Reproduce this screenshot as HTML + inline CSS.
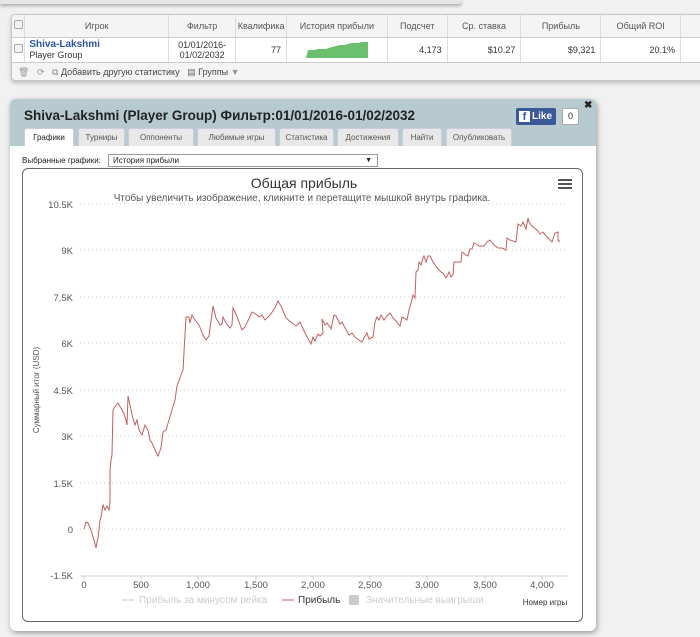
<!DOCTYPE html>
<html><head><meta charset="utf-8"><style>
*{box-sizing:border-box;margin:0;padding:0}
body{width:700px;height:637px;background:#f1f1f1;font-family:"Liberation Sans",sans-serif;position:relative;overflow:hidden;color:#333}
.abs{position:absolute}
.topshadow{left:0;top:0;width:462px;height:4px;background:#e6e6e6;box-shadow:0 2px 3px #aaa;border-radius:0 0 4px 0}
.panel{left:11px;top:14px;width:700px;height:67px;border:1px solid #c8c8c8;border-radius:4px;background:#f4f4f4;box-shadow:0 2px 4px #bbb;overflow:hidden}
table{border-collapse:collapse;font-size:9px;position:absolute;left:0;top:0}
th{height:22px;font-weight:normal;color:#555;background:#f4f4f4;border-right:1px solid #ddd;border-bottom:1px solid #ccc;text-align:center;white-space:nowrap;overflow:hidden}
td{height:25px;background:#fff;border-right:1px solid #ddd;border-bottom:1px solid #ccc;text-align:right;padding-right:5px;font-size:9px;color:#333}
.cb{display:inline-block;width:9px;height:9px;border:1px solid #aaa;border-radius:2px;background:#f4f4f4}
.tb{left:6px;top:52px;font-size:9px;color:#444}
.dlg{left:10px;top:99px;width:586px;height:532px;background:#fff;border-radius:6px;box-shadow:1px 2px 6px #999;overflow:hidden}
.hdr{left:0;top:0;width:586px;height:47px;background:#b7cad0}
.title{left:14px;top:9px;font-size:13.5px;font-weight:bold;color:#222}
.tab{top:29px;height:18px;background:#e8e8e8;border:1px solid #ccd;border-bottom:none;border-radius:3px 3px 0 0;font-size:8px;color:#555;text-align:center;line-height:17px}
.tab.act{background:#fff;color:#222}
.chart{left:12px;top:69px;width:561px;height:454px;border:1px solid #666;border-radius:6px}
</style></head><body>
<div class="abs topshadow"></div>
<div class="abs panel">
<table>
<tr><th style="width:13px"><span class="cb"></span></th><th style="width:148px">Игрок</th><th style="width:68px">Фильтр</th><th style="width:51px">Квалифика</th><th style="width:102px">История прибыли</th><th style="width:61px">Подсчет</th><th style="width:75px">Ср. ставка</th><th style="width:82px">Прибыль</th><th style="width:81px">Общий ROI</th><th style="width:30px"></th></tr>
<tr><td style="text-align:center;padding:0"><span class="cb"></span></td>
<td style="text-align:left;padding-left:4px;line-height:10px"><b style="color:#2a55a0;font-size:10px">Shiva-Lakshmi</b><br>Player Group</td>
<td style="text-align:center;padding:0;line-height:10px">01/01/2016-<br>01/02/2032</td>
<td>77</td>
<td style="text-align:center;padding:0"><svg width="62" height="18" viewBox="0 0 62 18"><path d="M0 18 L2 10 L8 10 L12 9 L20 9 L26 7 L30 6 L34 5 L38 5 L42 4 L46 3 L52 3 L56 2 L62 2 L62 18Z" fill="#6cbf6c"/></svg></td>
<td>4,173</td><td>$10.27</td><td>$9,321</td><td>20.1%</td><td></td></tr>
</table>
<div class="abs tb"><span style="color:#999">🗑</span>&nbsp;&nbsp;&nbsp;<span style="color:#999">⟳</span>&nbsp;&nbsp; <span style="color:#888">⧉</span> Добавить другую статистику &nbsp;&nbsp;<span style="color:#666">▤</span> Группы <span style="color:#999">▼</span></div>
</div>

<div class="abs dlg">
<div class="abs hdr"></div>
<div class="abs title">Shiva-Lakshmi (Player Group) Фильтр:01/01/2016-01/02/2032</div>
<div class="abs" style="left:506px;top:9px;width:40px;height:17px;background:#3b5998;border-radius:2px;color:#fff;font-size:10px;font-weight:bold;line-height:17px"><span style="display:inline-block;width:11px;height:11px;background:#fff;color:#3b5998;margin:3px 2px 0 3px;vertical-align:top;line-height:13px;text-align:center;font-size:11px">f</span>Like</div>
<div class="abs" style="left:552px;top:9px;width:17px;height:17px;background:#fff;border:1px solid #aaa;border-radius:2px;font-size:9px;text-align:center;line-height:15px">0</div>
<div class="abs" style="left:574px;top:1px;font-size:10px;font-weight:bold;color:#222">✖</div>
<div class="abs tab act" style="left:14px;width:50px">Графики</div>
<div class="abs tab" style="left:68px;width:47px">Турниры</div>
<div class="abs tab" style="left:118px;width:66px">Оппоненты</div>
<div class="abs tab" style="left:187px;width:79px">Любимые игры</div>
<div class="abs tab" style="left:269px;width:55px">Статистика</div>
<div class="abs tab" style="left:327px;width:62px">Достижения</div>
<div class="abs tab" style="left:392px;width:40px">Найти</div>
<div class="abs tab" style="left:436px;width:66px">Опубликовать</div>
<div class="abs" style="left:12px;top:57px;font-size:8px;color:#222">Выбранные графики:</div>
<div class="abs" style="left:98px;top:55px;width:270px;height:13px;border:1px solid #999;font-size:8px;line-height:11px;padding-left:4px;color:#222">История прибыли<span style="position:absolute;right:5px;font-size:7px">▼</span></div>
<div class="abs chart"></div>
</div>

<svg class="abs" style="left:0;top:0" width="700" height="637">
<text x="304" y="188" font-size="14" fill="#333" text-anchor="middle" font-family="Liberation Sans">Общая прибыль</text>
<text x="302" y="201" font-size="10" fill="#555" text-anchor="middle" font-family="Liberation Sans">Чтобы увеличить изображение, кликните и перетащите мышкой внутрь графика.</text>
<g fill="#555"><rect x="558" y="179" width="14" height="2"/><rect x="558" y="183" width="14" height="2"/><rect x="558" y="187" width="14" height="2"/></g>
<g stroke="#ccc" stroke-dasharray="1,3"><line x1="80" y1="204" x2="568" y2="204"/><line x1="80" y1="250" x2="568" y2="250"/><line x1="80" y1="297" x2="568" y2="297"/><line x1="80" y1="343" x2="568" y2="343"/><line x1="80" y1="390" x2="568" y2="390"/><line x1="80" y1="436" x2="568" y2="436"/><line x1="80" y1="483" x2="568" y2="483"/><line x1="80" y1="529" x2="568" y2="529"/></g>
<line x1="80" y1="576" x2="568" y2="576" stroke="#ccd"/>
<g stroke="#ccd"><line x1="84" y1="576" x2="84" y2="580"/><line x1="141" y1="576" x2="141" y2="580"/><line x1="198" y1="576" x2="198" y2="580"/><line x1="256" y1="576" x2="256" y2="580"/><line x1="313" y1="576" x2="313" y2="580"/><line x1="370" y1="576" x2="370" y2="580"/><line x1="427" y1="576" x2="427" y2="580"/><line x1="485" y1="576" x2="485" y2="580"/><line x1="542" y1="576" x2="542" y2="580"/></g>
<g font-size="9.5" fill="#555" text-anchor="end" font-family="Liberation Sans"><text x="73" y="208">10.5K</text><text x="73" y="254">9K</text><text x="73" y="301">7.5K</text><text x="73" y="347">6K</text><text x="73" y="394">4.5K</text><text x="73" y="440">3K</text><text x="73" y="487">1.5K</text><text x="73" y="533">0</text><text x="73" y="579">-1.5K</text></g>
<g font-size="9.5" fill="#555" text-anchor="middle" font-family="Liberation Sans"><text x="84" y="588">0</text><text x="141" y="588">500</text><text x="198" y="588">1,000</text><text x="256" y="588">1,500</text><text x="313" y="588">2,000</text><text x="370" y="588">2,500</text><text x="427" y="588">3,000</text><text x="485" y="588">3,500</text><text x="542" y="588">4,000</text></g>
<text transform="translate(39,390) rotate(-90)" font-size="8" fill="#555" text-anchor="middle" font-family="Liberation Sans">Суммарный итог (USD)</text>
<line x1="122" y1="600" x2="134" y2="600" stroke="#ccc"/>
<text x="139" y="603" font-size="10" fill="#ccc" font-family="Liberation Sans">Прибыль за минусом рейка</text>
<line x1="282" y1="600" x2="294" y2="600" stroke="#c66"/>
<text x="298" y="603" font-size="10" fill="#333" font-family="Liberation Sans">Прибыль</text>
<rect x="349" y="595" width="10" height="10" rx="1" fill="#ccc"/>
<text x="366" y="603" font-size="10" fill="#ccc" font-family="Liberation Sans">Значительные выигрыши</text>
<text x="545" y="605" font-size="8" fill="#333" text-anchor="middle" font-family="Liberation Sans">Номер игры</text>
<polyline fill="none" stroke="#c06060" stroke-width="1" points="84,529 86,522 88,523 91,530 94,540 96,548 97,542 98,538 100,520 101,517 103,505 105,510 107,506 109,510 110,501 110,470 111,460 112,455 113,410 114,408 118,403 122,410 124,414 126,420 127,425 128,396 130,405 132,415 135,425 137,420 139,430 142,435 145,425 148,430 150,440 152,443 156,452 158,456 161,448 163,432 166,430 169,420 172,410 175,400 177,386 181,375 183,370 186,317 189,317 190,323 192,315 195,320 199,325 203,335 206,340 209,336 211,321 213,306 216,318 220,325 222,324 223,317 226,323 230,328 232,325 233,308 236,314 239,322 242,330 245,327 252,312 256,314 259,317 262,315 265,320 270,315 275,308 278,301 281,306 286,318 292,323 296,326 300,322 305,333 311,344 313,337 315,341 318,334 320,336 323,333 322,319 325,325 327,323 331,329 334,315 336,316 340,324 342,322 344,326 349,335 352,333 355,337 359,340 362,342 364,338 367,333 369,339 373,337 375,322 377,317 379,320 381,315 384,320 388,315 390,313 393,318 396,321 400,326 402,317 404,318 407,320 409,310 411,303 413,295 415,298 416,272 418,270 419,262 421,265 423,258 424,256 426,262 428,256 430,256 432,260 435,265 438,269 441,272 443,273 446,278 449,272 451,277 453,275 454,262 457,262 461,262 462,252 466,255 468,256 470,249 472,249 474,243 476,244 479,246 484,246 487,242 490,240 494,245 498,248 502,248 506,250 507,238 510,240 516,242 518,224 521,226 523,222 526,229 528,218 529,222 532,226 537,230 540,234 543,232 546,236 549,239 552,242 555,233 558,232 558,240 560,242"/>
</svg>
</body></html>
